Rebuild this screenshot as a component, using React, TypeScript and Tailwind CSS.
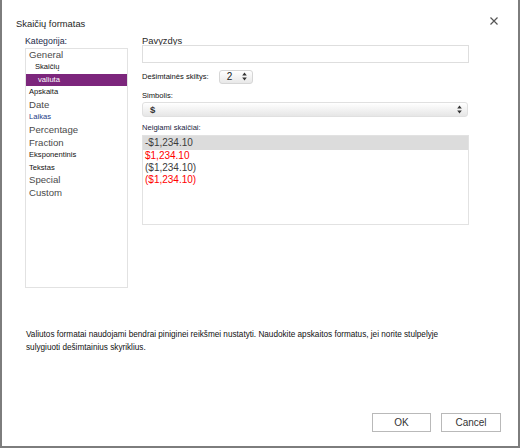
export default function App() {
  const categories = [
    { label: "General", size: "big", indent: "pl-[3px]" },
    { label: "Skaičių", size: "small", indent: "pl-[9px]" },
    { label: "valiuta", size: "small", indent: "pl-[12px]", selected: true },
    { label: "Apskaita", size: "small", indent: "pl-[3px]" },
    { label: "Date", size: "big", indent: "pl-[3px]" },
    { label: "Laikas", size: "small", indent: "pl-[3px]", blue: true },
    { label: "Percentage", size: "big", indent: "pl-[3px]" },
    { label: "Fraction", size: "big", indent: "pl-[3px]" },
    { label: "Eksponentinis", size: "small", indent: "pl-[3px]" },
    { label: "Tekstas", size: "small", indent: "pl-[3px]" },
    { label: "Special", size: "big", indent: "pl-[3px]" },
    { label: "Custom", size: "big", indent: "pl-[3px]" },
  ];

  const negatives = [
    { text: "-$1,234.10", red: false },
    { text: "$1,234.10", red: true },
    { text: "($1,234.10)", red: false },
    { text: "($1,234.10)", red: true },
  ];

  return (
    <div className="w-[520px] h-[448px] bg-white border-x-2 border-b-2 border-[#7d7d7d] flex flex-col font-['Liberation_Sans',Arial,sans-serif] overflow-hidden">
      {/* Header */}
      <div className="flex justify-between items-start pl-[14px] pr-[20px]">
        <div className="mt-[17px] text-[9.4px] leading-[14px] text-[#1f1f1f]">Skaičių formatas</div>
        <button className="mt-[17px] w-[8px] h-[8px] flex items-center justify-center">
          <svg width="8" height="8" viewBox="0 0 8 8">
            <path d="M0.5 0.5 L7.5 7.5 M7.5 0.5 L0.5 7.5" stroke="#555" strokeWidth="1.2" />
          </svg>
        </button>
      </div>

      {/* Body */}
      <div className="flex gap-[14px] pl-[23px] mt-[3px]">
        {/* Category column */}
        <div className="w-[103px] flex flex-col">
          <div className="h-[13.5px] text-[8.8px] leading-[14px] text-[#1b2b4b]">Kategorija:</div>
          <div className="h-[240px] border border-[#e2e2e2] flex flex-col">
            {categories.map((c) => (
              <div
                key={c.label}
                className={`h-[12.6px] leading-[12.6px] whitespace-nowrap ${c.indent} ${
                  c.selected ? "bg-[#7c267c] text-white" : ""
                } ${
                  c.size === "big"
                    ? "text-[9.6px] text-[#4a4a4a]"
                    : c.selected
                    ? "text-[7.6px]"
                    : c.blue
                    ? "text-[7.6px] text-[#1d3a86]"
                    : "text-[7.6px] text-[#111111]"
                }`}
              >
                {c.label}
              </div>
            ))}
          </div>
        </div>

        {/* Right column */}
        <div className="w-[327px] flex flex-col">
          <div className="h-[11px] text-[9.4px] leading-[13px] text-[#2a2a2a]">Pavyzdys</div>
          <div className="h-[18px] border border-[#dedede]" />

          <div className="mt-[6px] h-[15px] flex items-center gap-[10px]">
            <span className="text-[7.6px] text-[#111]">Dešimtainės skiltys:</span>
            <div className="w-[34px] h-[14px] rounded-[3px] border border-[#d6d6d6] bg-gradient-to-b from-white to-[#e8e8e8] flex items-center justify-between pl-[7px] pr-[5px]">
              <span className="text-[10px] leading-[12px] text-[#222]">2</span>
              <svg width="5" height="9" viewBox="0 0 5 9">
                <path d="M2.5 0.5 L4.8 3.6 L0.2 3.6 Z M2.5 8.5 L4.8 5.4 L0.2 5.4 Z" fill="#333" />
              </svg>
            </div>
          </div>

          <div className="mt-[6px] text-[7.6px] leading-[12px] text-[#111]">Simbolis:</div>
          <div className="h-[15px] w-[326px] rounded-[3px] border border-[#e0e0e0] bg-gradient-to-b from-white to-[#e6e6e6] flex items-center justify-between pl-[7px] pr-[5px]">
            <span className="text-[9.5px] leading-[12px] font-bold text-[#333]">$</span>
            <svg width="5" height="9" viewBox="0 0 5 9">
              <path d="M2.5 0.5 L4.8 3.6 L0.2 3.6 Z M2.5 8.5 L4.8 5.4 L0.2 5.4 Z" fill="#333" />
            </svg>
          </div>

          <div className="mt-[5px] text-[7.6px] leading-[12px] text-[#1a2440]">Neigiami skaičiai:</div>
          <div className="mt-[1px] h-[90px] w-[327px] border border-[#e2e2e2] flex flex-col">
            {negatives.map((n, i) => (
              <div
                key={i}
                className={`pl-[2px] text-[10px] ${
                  i === 0 ? "h-[14px] leading-[14px] bg-[#dcdcdc]" : "h-[12px] leading-[12px]"
                } ${n.red ? "text-[#ff0000]" : "text-[#3c3c3c]"}`}
              >
                {n.text}
              </div>
            ))}
          </div>
        </div>
      </div>

      {/* Description */}
      <p className="mt-[40px] pl-[24px] text-[8.2px] leading-[13px] text-[#111]">
        Valiutos formatai naudojami bendrai piniginei reikšmei nustatyti. Naudokite apskaitos formatus, jei norite stulpelyje
        <br />
        sulygiuoti dešimtainius skyriklius.
      </p>

      {/* Buttons */}
      <div className="mt-auto mb-[14px] flex justify-end gap-[10px] pr-[17px]">
        <button className="w-[59px] h-[19px] border border-[#b9b9b9] bg-white text-[10px] text-[#333]">OK</button>
        <button className="w-[60px] h-[19px] border border-[#b9b9b9] bg-white text-[10px] text-[#333]">Cancel</button>
      </div>
    </div>
  );
}
